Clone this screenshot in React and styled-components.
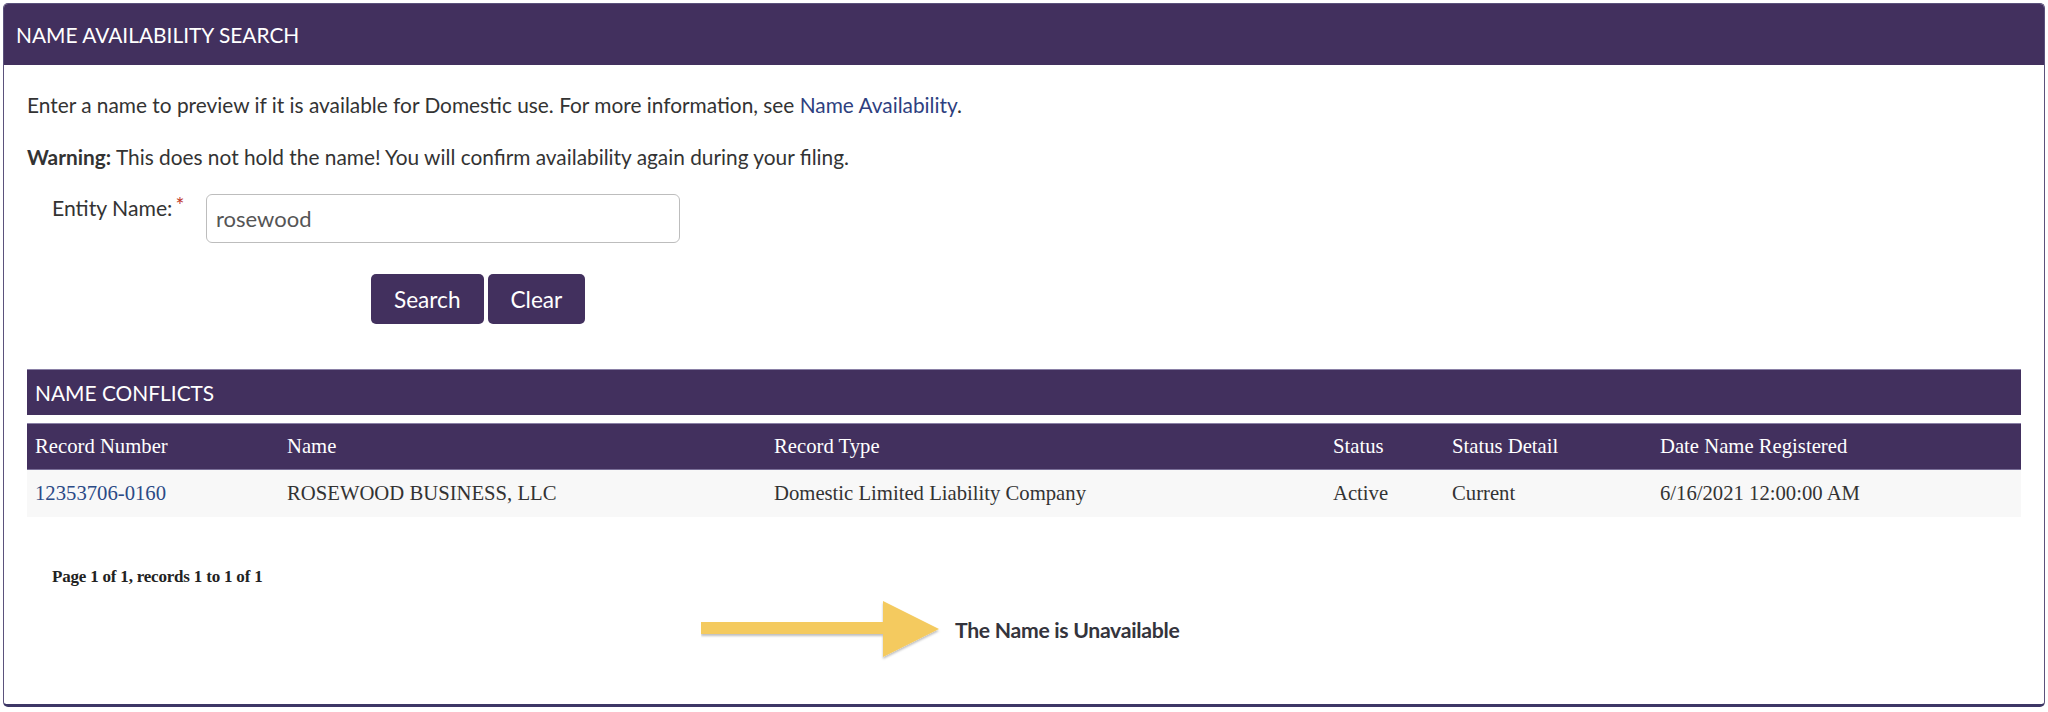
import React from "react";
import styled, { createGlobalStyle } from "styled-components";

const PURPLE = "#42305e";

const GlobalStyle = createGlobalStyle`
  html, body {
    margin: 0;
    padding: 0;
    background: #ffffff;
  }
  body {
    font-family: Lato, "Open Sans", Arial, sans-serif;
    color: #333333;
  }
`;

const Panel = styled.section`
  margin: 3px;
  width: 2042px;
  height: 704px;
  box-sizing: border-box;
  border: 1px solid #5b527c;
  border-bottom: 3px solid #3d3766;
  border-radius: 5px;
  overflow: hidden;
  display: flex;
  flex-direction: column;
`;

const PanelHeader = styled.header`
  height: 61px;
  flex: none;
  display: flex;
  align-items: center;
  padding: 0 12px;
  background: ${PURPLE};
  color: #ffffff;
  font-size: 20.9px;
`;

const Body = styled.div`
  padding: 0 23px;
  display: flex;
  flex-direction: column;
`;

const Para = styled.p`
  margin: ${(p) => p.$top}px 0 0;
  font-size: 20.85px;
  line-height: 29px;
  color: #333333;

  b {
    font-weight: 700;
  }
`;

const Link = styled.a`
  color: #2e3f80;
  text-decoration: none;
`;

const FormRow = styled.div`
  margin-top: 23px;
  padding-left: 25px;
  display: flex;
  align-items: flex-start;
`;

const Label = styled.label`
  font-size: 21.2px;
  line-height: 29px;
  display: flex;
  width: 154px;
`;

const Required = styled.span`
  color: #c0392b;
  font-size: 21px;
  line-height: 22px;
  margin-left: 3px;
`;

const TextInput = styled.input`
  width: 474px;
  height: 49px;
  box-sizing: border-box;
  border: 1px solid #bdbdbd;
  border-radius: 6px;
  padding: 0 9px;
  font-family: Lato, "Open Sans", Arial, sans-serif;
  font-size: 22px;
  color: #555555;
  outline: none;
`;

const ButtonRow = styled.div`
  margin-top: 31px;
  padding-left: 344px;
  display: flex;
  gap: 4px;
`;

const Button = styled.button`
  height: 50px;
  padding: 0 23px;
  border: none;
  border-radius: 5px;
  background: ${PURPLE};
  color: #ffffff;
  font-family: Lato, "Open Sans", Arial, sans-serif;
  font-size: 22.6px;
  cursor: pointer;
`;

const SectionBar = styled.div`
  margin-top: 45px;
  height: 46px;
  box-sizing: border-box;
  border-top: 1px solid #8a80a6;
  display: flex;
  align-items: center;
  padding-left: 8px;
  background: ${PURPLE};
  color: #ffffff;
  font-size: 20.9px;
`;

const Table = styled.table`
  margin-top: 8px;
  width: 100%;
  table-layout: fixed;
  border-collapse: collapse;
  font-family: "Liberation Serif", "Times New Roman", serif;
  font-size: 20.7px;
`;

const HeadCell = styled.th`
  height: 45px;
  padding: 0 8px;
  text-align: left;
  font-weight: 400;
  color: #ffffff;
  background: ${PURPLE};
  border-top: 1px solid #8a80a6;
  border-bottom: 1px solid #7a6f98;
`;

const Cell = styled.td`
  height: 47px;
  padding: 0 8px;
  background: #f8f8f8;
  color: #333333;
`;

const RecordLink = styled.a`
  color: #2b4a86;
  text-decoration: none;
`;

const Pager = styled.div`
  margin-top: 49px;
  padding-left: 25px;
  font-family: "Liberation Serif", "Times New Roman", serif;
  font-weight: 700;
  font-size: 17px;
  line-height: 22px;
  color: #222222;
  letter-spacing: -0.2px;
`;

const Callout = styled.div`
  margin-top: 13px;
  padding-left: 674px;
  display: flex;
  align-items: center;
  gap: 14px;
`;

const CalloutText = styled.span`
  font-size: 21.2px;
  font-weight: 700;
  color: #34343c;
  letter-spacing: -0.3px;
  margin-top: -2px;
`;

const Arrow = () => (
  <svg width="240" height="60" viewBox="0 0 240 60">
    <defs>
      <filter id="arrowShadow" x="-5%" y="-10%" width="110%" height="130%">
        <feDropShadow dx="0" dy="2" stdDeviation="1.2" floodColor="#000" floodOpacity="0.25" />
      </filter>
    </defs>
    <g filter="url(#arrowShadow)" fill="#f4ca5e">
      <rect x="0" y="21" width="184" height="12" />
      <polygon points="182,0 238,28 182,56" />
    </g>
  </svg>
);

const columns = [
  { key: "record", label: "Record Number", width: 252 },
  { key: "name", label: "Name", width: 487 },
  { key: "type", label: "Record Type", width: 559 },
  { key: "status", label: "Status", width: 119 },
  { key: "detail", label: "Status Detail", width: 208 },
  { key: "date", label: "Date Name Registered" },
];

const rows = [
  {
    record: "12353706-0160",
    name: "ROSEWOOD BUSINESS, LLC",
    type: "Domestic Limited Liability Company",
    status: "Active",
    detail: "Current",
    date: "6/16/2021 12:00:00 AM",
  },
];

export default function App() {
  return (
    <>
      <GlobalStyle />
      <Panel>
        <PanelHeader>NAME AVAILABILITY SEARCH</PanelHeader>
        <Body>
          <Para $top={25}>
            Enter a name to preview if it is available for Domestic use. For more information, see{" "}
            <Link href="#">Name Availability</Link>.
          </Para>
          <Para $top={23}>
            <b>Warning:</b> This does not hold the name! You will confirm availability again during your filing.
          </Para>
          <FormRow>
            <Label htmlFor="entity-name">
              Entity Name:<Required>*</Required>
            </Label>
            <TextInput id="entity-name" defaultValue="rosewood" />
          </FormRow>
          <ButtonRow>
            <Button>Search</Button>
            <Button>Clear</Button>
          </ButtonRow>
          <SectionBar>NAME CONFLICTS</SectionBar>
          <Table>
            <colgroup>
              {columns.map((c) => (
                <col key={c.key} style={c.width ? { width: c.width } : undefined} />
              ))}
            </colgroup>
            <thead>
              <tr>
                {columns.map((c) => (
                  <HeadCell key={c.key}>{c.label}</HeadCell>
                ))}
              </tr>
            </thead>
            <tbody>
              {rows.map((r) => (
                <tr key={r.record}>
                  {columns.map((c) => (
                    <Cell key={c.key}>
                      {c.key === "record" ? <RecordLink href="#">{r[c.key]}</RecordLink> : r[c.key]}
                    </Cell>
                  ))}
                </tr>
              ))}
            </tbody>
          </Table>
          <Pager>Page 1 of 1, records 1 to 1 of 1</Pager>
          <Callout>
            <Arrow />
            <CalloutText>The Name is Unavailable</CalloutText>
          </Callout>
        </Body>
      </Panel>
    </>
  );
}
